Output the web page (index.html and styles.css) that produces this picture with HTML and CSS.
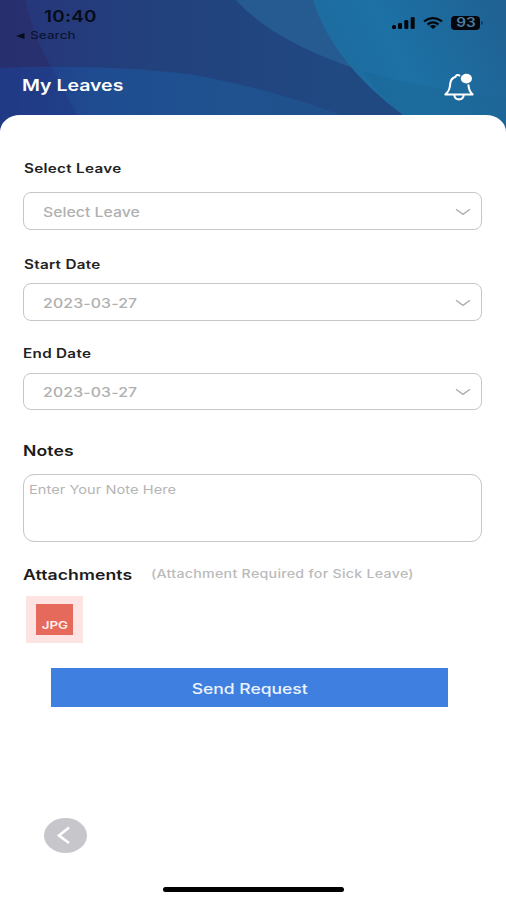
FILE: index.html
```html
<!DOCTYPE html>
<html lang="en">
<head>
<meta charset="utf-8">
<title>My Leaves</title>
<link rel="stylesheet" href="styles.css">
</head>
<body>
<div class="screen">
  <header class="header">
    <svg class="header-art" viewBox="0 0 506 136" preserveAspectRatio="none" aria-hidden="true">
      <defs>
        <linearGradient id="base" x1="0" x2="1" y1="0" y2="0"><stop offset="0" stop-color="#27357a"/><stop offset=".3" stop-color="#22417d"/><stop offset=".7" stop-color="#204982"/></linearGradient>
        <linearGradient id="low" x1="0" x2="1" y1="0" y2="0"><stop offset="0" stop-color="#223b86"/><stop offset=".25" stop-color="#1f4c91"/><stop offset=".6" stop-color="#1f528f"/><stop offset="1" stop-color="#1f4f88"/></linearGradient>
        <linearGradient id="right" x1="0" x2="1" y1=".55" y2=".2"><stop offset="0" stop-color="#1f6a9f"/><stop offset=".45" stop-color="#1c71a5"/><stop offset="1" stop-color="#206294"/></linearGradient>
      </defs>
      <path fill="url(#base)" d="M0 0H506V136H0z"/>
      <path fill="#292d69" opacity=".65" d="M0 0H25Q34 38 52 69H0z"/>
      <path fill="url(#low)" d="M0 68Q130 64 205 77Q310 98 390 136H0z"/>
      <path fill="#223985" opacity=".6" d="M0 68H52Q65 95 90 136H0z"/>
      <path fill="#255b91" d="M236 0Q272 41 362 71L350 0z"/>
      <path fill="url(#right)" d="M313 0Q332 62 403 115L430 136H506V0z"/>
      <path fill="#1d6493" opacity=".35" d="M362 71Q430 90 506 99V136H430L403 115Q380 97 362 71z"/>
    </svg>
    <div class="status">
      <div class="status-left">
        <div class="clock"><span class="wide">10:40</span></div>
        <div class="back-app"><span class="wide"><i class="tri"></i>Search</span></div>
      </div>
      <div class="status-right">
        <svg width="23" height="12" viewBox="0 0 23 12"><g fill="#05070d"><rect y="8" width="4" height="4" rx="1.5"/><rect x="6" y="6" width="4" height="6" rx="1.3"/><rect x="12.3" y="3" width="4" height="9" rx="1.3"/><rect x="18.7" width="4" height="12" rx="1.3"/></g></svg>
        <svg width="20" height="12" viewBox="0 0 20 12"><g fill="none" stroke="#05070d" stroke-width="2.2"><path d="M1 4.4Q10-2.2 19 4.4"/><path d="M4.5 7.5Q10 3.4 15.5 7.5"/></g><path fill="#05070d" d="M6.7 9.3Q10 6.9 13.3 9.3L10 12z"/></svg>
        <div class="battery"><span class="wide mid">93</span></div>
      </div>
    </div>
    <div class="title-row">
      <h1 class="title"><span class="wide">My Leaves</span></h1>
      <svg class="bell" width="32" height="29" viewBox="0 0 32 29"><g fill="none" stroke="#fff" stroke-width="2.1" stroke-linecap="round" stroke-linejoin="round"><path d="M16.4 2.6C15 1.3 13 2.2 12.6 3.7C8.8 4.9 7.3 7.4 7.1 11.5C6.9 16.5 5.6 18.3 2.4 21.5H29.6C26.5 18.4 25.7 16 25.5 12.2"/><path d="M11.3 22C11.8 27.8 20.2 27.8 20.7 22"/></g><ellipse cx="23.4" cy="5.6" rx="5.6" ry="4.9" fill="#fff"/></svg>
    </div>
  </header>
  <main class="sheet">
    <label class="label first"><span class="wide">Select Leave</span></label>
    <div class="field f1"><span class="wide">Select Leave</span><svg class="chev" width="16" height="8" viewBox="0 0 16 8"><path d="M1 1.2L8 6.4L15 1.2"/></svg></div>
    <label class="label second"><span class="wide">Start Date</span></label>
    <div class="field f2"><span class="wide date">2023-03-27</span><svg class="chev" width="16" height="8" viewBox="0 0 16 8"><path d="M1 1.2L8 6.4L15 1.2"/></svg></div>
    <label class="label third"><span class="wide">End Date</span></label>
    <div class="field f3"><span class="wide date">2023-03-27</span><svg class="chev" width="16" height="8" viewBox="0 0 16 8"><path d="M1 1.2L8 6.4L15 1.2"/></svg></div>
    <label class="label large notes-label"><span class="wide">Notes</span></label>
    <div class="notes"><span class="wide">Enter Your Note Here</span></div>
    <div class="attach-head">
      <div class="label large attach-label"><span class="wide">Attachments</span></div>
      <div class="hint"><span class="wide">(Attachment Required for Sick Leave)</span></div>
    </div>
    <div class="thumb"><div class="jpg"><span class="wide mid">JPG</span></div></div>
    <div class="send"><span class="wide mid">Send Request</span></div>
    <div class="back"><svg width="14" height="19" viewBox="0 0 14 19"><path d="M12 1.5L2 9.5L12 17"/></svg></div>
    <div class="home"></div>
  </main>
</div>
</body>
</html>
```
FILE: styles.css
```css
* { box-sizing: border-box; }
body { margin: 0; font-family: Inter, "Liberation Sans", sans-serif; background: #fff; }
.screen { width: 506px; height: 900px; overflow: hidden; display: flex; flex-direction: column; }
.wide { display: inline-block; white-space: nowrap; transform: scaleX(1.217); transform-origin: 0 50%; }
.wide.mid { transform-origin: 50% 50%; }

.header { position: relative; height: 115px; flex: none; }
.header-art { position: absolute; left: 0; top: 0; width: 506px; height: 136px; }
.status { position: relative; height: 46px; display: flex; justify-content: space-between; padding: 7px 26px 0 16px; color: #080b18; }
.clock { padding-left: 28px; height: 19px; line-height: 19px; font-size: 15.5px; font-weight: 600; letter-spacing: .2px; }
.back-app { height: 18px; line-height: 18px; font-size: 11px; font-weight: 500; color: #0b1430; letter-spacing: .1px; }
.tri { display: inline-block; border: solid transparent; border-width: 3.5px 7.5px 3.5px 0; border-right-color: #080b18; margin-right: 4.5px; vertical-align: 0.5px; }
.status-right { display: flex; align-items: center; height: 32px; gap: 8px; }
.battery { width: 29px; height: 14px; border-radius: 4px; background: #05070d; color: #4b7fa3; font-size: 12.5px; font-weight: 600; line-height: 14px; text-align: center; position: relative; }
.battery::after { content: ""; position: absolute; right: -3px; top: 5px; width: 2px; height: 4px; border-radius: 0 2px 2px 0; background: #163f60; }
.title-row { position: relative; height: 69px; display: flex; justify-content: space-between; padding: 27px 31px 0 22px; }
.title { margin: 0; height: 24px; line-height: 25px; font-size: 16px; font-weight: 600; color: #fff; }
.bell { flex: none; }

.sheet { position: relative; flex: 1; background: #fff; border-radius: 20px 20px 0 0 / 17px 17px 0 0; padding: 43px 24px 0 23px; display: flex; flex-direction: column; }
.sheet > * { flex: none; }
.label { display: block; height: 20px; line-height: 21px; padding-left: 1px; font-size: 12.5px; letter-spacing: .25px; font-weight: 600; color: #222; }
.large { font-size: 14.5px; letter-spacing: .05px; padding-left: 0; color: #1c1c1c; }
.field { height: 38px; border: 1.5px solid #c6c6c6; border-radius: 8px; display: flex; align-items: center; justify-content: space-between; padding: 1px 10px 0 19px; font-size: 13px; font-weight: 500; color: #b0b0b0; }
.date { letter-spacing: .13px; }
.chev { fill: none; stroke: #adadad; stroke-width: 1.4; }
.f1 { margin-top: 14px; }
.second { margin-top: 24px; }
.f2 { margin-top: 9px; }
.third { margin-top: 22px; padding-left: 0; }
.f3 { margin-top: 10px; height: 37px; }
.notes-label { margin-top: 30px; }
.notes { margin-top: 14px; height: 68px; border: 1.5px solid #c6c6c6; border-radius: 11px; padding: 6px 5px; font-size: 12px; line-height: 18px; letter-spacing: .04px; color: #b5b5b5; }
.attach-head { display: flex; height: 20px; margin-top: 22px; }
.attach-label { width: 128px; }
.hint { line-height: 21px; font-size: 11.7px; letter-spacing: .22px; font-weight: 500; color: #bababa; }
.thumb { width: 57px; height: 47px; margin: 12px 0 0 3px; padding: 8px 10px; background: #fde3e1; }
.jpg { width: 37px; height: 31px; background: #e66a5c; color: #fff0ee; font-size: 11px; font-weight: 600; text-align: center; line-height: 14px; padding-top: 14px; }
.send { width: 397px; height: 39px; margin: 25px 0 0 28px; background: #3f7fdf; color: #eaf3ff; font-size: 14.4px; font-weight: 500; line-height: 41px; text-align: center; }
.back { width: 43px; height: 35px; margin: 111px 0 0 21px; border-radius: 50%; background: #c7c7cb; display: flex; align-items: center; justify-content: center; padding-right: 3px; }
.back path { fill: none; stroke: #fff; stroke-width: 2.6; }
.home { width: 181px; height: 5px; margin: 34px 0 0 140px; border-radius: 3px; background: #000; }
```
